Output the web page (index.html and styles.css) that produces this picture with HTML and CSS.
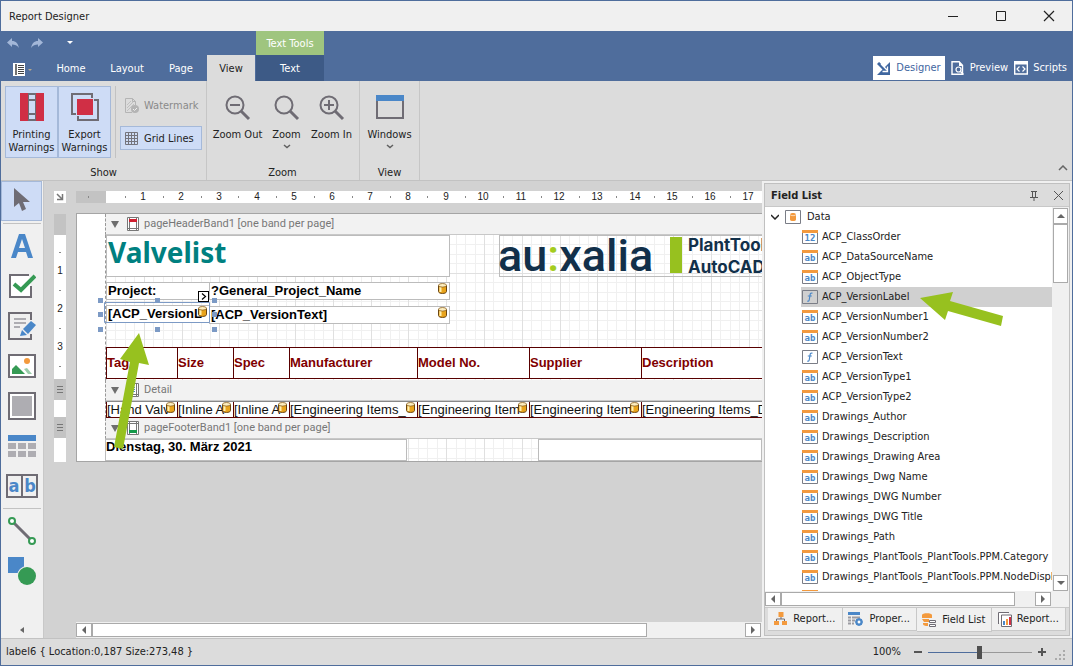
FILE: index.html
```html
<!DOCTYPE html>
<html lang="en">
<head>
<meta charset="utf-8">
<title>Report Designer</title>
<link rel="stylesheet" href="styles.css">
</head>
<body>
<svg class="defs" aria-hidden="true">
  <symbol id="db" viewBox="0 0 9 11"><path d="M.5 2.500v6c0 2.600 8 2.600 8 0v-6z" fill="#e9a41c" stroke="#6b4510"/><path d="M2.500 4v5" stroke="#fff0b0" stroke-width="2"/><ellipse cx="4.500" cy="2.300" rx="4" ry="1.800" fill="#fdeec0" stroke="#8a6020" stroke-width=".8"/></symbol>
  <symbol id="ab" viewBox="0 0 16 14"><path d="M.5 2v11.500h15V2" fill="#fff" stroke="#7a7d86"/><path d="M0 0h16v3H0z" fill="#f39a3e"/><text x="8" y="11" class="glyph">ab</text></symbol>
  <symbol id="num" viewBox="0 0 16 14"><path d="M.5 2v11.500h15V2" fill="#fff" stroke="#7a7d86"/><path d="M0 0h16v3H0z" fill="#f39a3e"/><text x="8" y="11" class="glyph">12</text></symbol>
  <symbol id="fn" viewBox="0 0 16 14"><path d="M.5.500h15v13H.5z" fill="none" stroke="#7a7d86"/><path d="M10.500 3.300c-2-.8-2.300.6-2.500 2L7.300 9.500c-.2 1.500-.9 2-2 1.500M5.800 6h4" fill="none" stroke="#4a87c8" stroke-width="1.200"/></symbol>
  <symbol id="lens" viewBox="0 0 26 26"><circle cx="10" cy="10" r="8.500" fill="none" stroke="#6f6c74" stroke-width="2"/><path d="m16 16 8 8" stroke="#6f6c74" stroke-width="3"/></symbol>
  <symbol id="chev" viewBox="0 0 8 5"><path d="m1 1 3 2.500L7 1" fill="none" stroke="#606060" stroke-width="1.500"/></symbol>
  <symbol id="tri" viewBox="0 0 8 8"><path d="M0 1h8L4 8z" fill="#6e6e6e"/></symbol>
</svg>
<div class="window">
  <header class="titlebar">
    <h1>Report Designer</h1>
    <button aria-label="Minimize"><svg width="12" height="12"><path d="M1 6.500h10" stroke="#222"/></svg></button>
    <button aria-label="Maximize"><svg width="12" height="12"><path d="M1.500 1.500h9v9h-9z" fill="none" stroke="#222"/></svg></button>
    <button aria-label="Close"><svg width="12" height="12"><path d="m1 1 10 10M11 1 1 11" stroke="#222" stroke-width="1.200"/></svg></button>
  </header>

  <div class="ribbon-head">
    <div class="quick">
      <button aria-label="Undo"><svg width="12" height="10"><path d="M0 4.500 5 0v3c4 0 6 2.500 7 7-2-3-4-3.500-7-3.500V9z" fill="#a3b7d8"/></svg></button>
      <button aria-label="Redo"><svg width="12" height="10"><path d="M12 4.500 7 0v3C3 3 1 5.500 0 10c2-3 4-3.500 7-3.500V9z" fill="#a3b7d8"/></svg></button>
      <button aria-label="Customize" class="custom"><svg width="6" height="4"><path d="M0 0h6L3 3z" fill="#fff"/></svg></button>
    </div>
    <nav class="tabs">
      <button class="file" aria-label="File"><svg width="19" height="13"><path d="M0 0h12v13H0z" fill="#fff"/><path d="M3 1v11" stroke="#444" stroke-width="1.500"/><path d="M5 2.500h6M5 4.500h6M5 6.500h6M5 8.500h6M5 10.500h6" stroke="#444"/><path d="M15 6h4l-2 2z" fill="#b9a98c"/></svg></button>
      <button>Home</button><button>Layout</button><button class="page-tab">Page</button><button class="active">View</button>
      <div class="context"><span>Text Tools</span><button>Text</button></div>
    </nav>
    <div class="modes">
      <button class="on"><svg width="14" height="13"><path d="M13 0v13H0z" fill="#3f669f"/><path d="m1 1 8 8" stroke="#3f669f" stroke-width="3"/><path d="m4 2 6 6M10.500 4.500v5h-5" stroke="#fff" stroke-width="1.300" fill="none"/></svg>Designer</button>
      <button><svg width="14" height="14"><path d="M11.500 13.300H1V.7h7l3.500 3.500z" fill="none" stroke="#fff" stroke-width="1.400"/><path d="M8 0v5h4" fill="#fff"/><circle cx="7.500" cy="8.500" r="2.500" fill="#4f6d9c" stroke="#fff" stroke-width="1.200"/><path d="m9.500 10.500 3 3" stroke="#fff" stroke-width="1.500"/></svg>Preview</button>
      <button><svg width="14" height="14"><path d="M.7 1h12.600v12H.7z" fill="none" stroke="#fff" stroke-width="1.400"/><path d="M0 0h14v3.500H0z" fill="#fff"/><path d="M5.500 5.500 3 8l2.500 2.500M8.500 5.500 11 8l-2.500 2.500" fill="none" stroke="#fff" stroke-width="1.200"/></svg>Scripts</button>
    </div>
  </div>

  <section class="ribbon">
    <div class="group show">
      <div class="items">
        <div class="pair">
          <button class="big on"><svg width="24" height="28"><path d="M8 1h8v26H8zM8 7h8M8 21h8" fill="none" stroke="#6f6c74" stroke-width="2"/><path d="M0 0h8v28H0zM16 0h8v28h-8z" fill="#d02f45"/></svg><span>Printing<br>Warnings</span></button>
          <button class="big on"><svg width="28" height="28"><path d="M1 1h20v20H1zM7 7h20v20H7z" fill="none" stroke="#6f6c74" stroke-width="2"/><path d="M5 5h18v18H5z" fill="#cedcf6"/><path d="M6 6h16v16H6z" fill="#d02f45"/></svg><span>Export<br>Warnings</span></button>
        </div>
        <div class="stack">
          <button disabled><svg width="14" height="15"><path d="M7 14.500H.5V.5h7l3 3V7M7.500.5v3h3" fill="none" stroke="#b4b4b4"/><path d="m2 7 4-4M2 10l6-6M2 13l7-7" stroke="#c0c0c0"/><circle cx="10" cy="11" r="4" fill="#b4b4b4"/><path d="m8 11 1.500 1.500L12 10" fill="none" stroke="#eee"/></svg>Watermark</button>
          <button class="on"><svg width="14" height="14"><path d="M.5.500h12v12H.5zM3.500 0v13M6.500 0v13M9.500 0v13M0 3.500h13M0 6.500h13M0 9.500h13" fill="none" stroke="#74747c"/></svg>Grid Lines</button>
        </div>
      </div>
      <h2>Show</h2>
    </div>
    <div class="group zoom">
      <div class="items">
        <button class="big"><svg width="26" height="26"><use href="#lens"/><path d="M5 10h10" stroke="#6f6c74" stroke-width="2"/></svg><span>Zoom Out</span></button>
        <button class="big mid"><svg width="26" height="26"><use href="#lens"/></svg><span>Zoom</span><svg width="8" height="5"><use href="#chev"/></svg></button>
        <button class="big"><svg width="26" height="26"><use href="#lens"/><path d="M5 10h10M10 5v10" stroke="#6f6c74" stroke-width="2"/></svg><span>Zoom In</span></button>
      </div>
      <h2>Zoom</h2>
    </div>
    <div class="group view">
      <div class="items">
        <button class="big"><svg width="28" height="26"><path d="M1 2h26v21H1z" fill="none" stroke="#6f6c74" stroke-width="2"/><path d="M0 0h28v6H0z" fill="#4a87c8"/></svg><span>Windows</span><svg width="8" height="5"><use href="#chev"/></svg></button>
      </div>
      <h2>View</h2>
    </div>
    <button class="collapse" aria-label="Collapse ribbon"><svg width="10" height="6"><path d="m1 5 4-4 4 4" fill="none" stroke="#666" stroke-width="1.500"/></svg></button>
  </section>

  <main>
    <aside class="toolbox">
      <button class="on" aria-label="Pointer"><svg width="18" height="26"><path d="M1 0v19l5-4 3 8 4-2-3-7h7z" fill="#6f6c74"/></svg></button>
      <hr>
      <button aria-label="Label"><svg width="24" height="26"><path fill-rule="evenodd" d="M1 25 9 1h6l8 24h-5l-2-6H8l-2 6zM9 15h6l-3-9z" fill="#4a87c8"/></svg></button>
      <button aria-label="Check Box"><svg width="28" height="26"><path d="M21 2H2v22h21V13" fill="#fff" stroke="#6f6c74" stroke-width="2"/><path d="m6 11 7 6L27 3" fill="none" stroke="#359a54" stroke-width="4"/></svg></button>
      <button aria-label="Rich Text"><svg width="28" height="28"><path d="M23 8V1H1v26h22v-5" fill="none" stroke="#6f6c74" stroke-width="2"/><path d="M6 7h12M6 11h12M6 15h6" stroke="#aeadb2" stroke-width="2"/><path d="m12 24 2-6 5 5zM15 17l8-8 5 4-8 9z" fill="#4a87c8"/></svg></button>
      <button aria-label="Picture Box"><svg width="28" height="24"><path d="M1 1h26v22H1z" fill="#fff" stroke="#6f6c74" stroke-width="2"/><circle cx="19" cy="7" r="3" fill="#f39a3e"/><path d="M4 20v-5l4-4 9 9z" fill="#359a54"/><path d="m16 15 3-1 5 6h-4z" fill="#9accaa"/></svg></button>
      <button aria-label="Panel"><svg width="28" height="28"><path d="M1 1h26v26H1z" fill="#fff" stroke="#6f6c74" stroke-width="2"/><path d="M4 4h20v20H4z" fill="#aeadb2"/></svg></button>
      <button aria-label="Table"><svg width="28" height="22"><path d="M0 0h28v6H0z" fill="#4a87c8"/><path d="M0 8h8v6H0zM10 8h8v6h-8zM20 8h8v6h-8zM0 16h8v6H0zM10 16h8v6h-8zM20 16h8v6h-8z" fill="#aeadb2"/></svg></button>
      <button aria-label="Character Comb"><svg width="32" height="24"><path d="M1 1h30v22H1zM16 1v22" fill="none" stroke="#6f6c74" stroke-width="2"/><text x="8" y="18" class="comb">a</text><text x="24" y="18" class="comb">b</text></svg></button>
      <hr>
      <button aria-label="Line"><svg width="28" height="28"><path d="m5 5 18 18" stroke="#6f6c74" stroke-width="3"/><circle cx="4" cy="4" r="3" fill="#fff" stroke="#359a54" stroke-width="2"/><circle cx="24" cy="24" r="3" fill="#fff" stroke="#359a54" stroke-width="2"/></svg></button>
      <button aria-label="Shape"><svg width="28" height="28"><path d="M0 0h16v16H0z" fill="#4a87c8"/><circle cx="19" cy="19" r="10" fill="#f0f0f0"/><circle cx="19" cy="19" r="9" fill="#359a54"/></svg></button>
      <button class="fold" aria-label="Collapse"><svg width="4" height="6"><path d="M4 0v6L0 3z" fill="#666"/></svg></button>
    </aside>

    <section class="surface">
      <button class="corner" aria-label="Select report"><svg width="8" height="8"><path d="m1 1 5 5M6.500 1v5.500H1" fill="none" stroke="#777" stroke-width="1.500"/></svg></button>
      <svg class="hruler" height="12"><path d="M0 0h30v12H0z" fill="#c3c3c3"/><path d="M30 0h660v12H30z" fill="#fff"/>
        <path d="M12.500 5v2M49.500 5v2M87.500 5v2M125.500 5v2M162.500 5v2M200.500 5v2M238.500 5v2M276.500 5v2M314.500 5v2M351.500 5v2M389.500 5v2M427.500 5v2M465.500 5v2M503.500 5v2M540.500 5v2M578.500 5v2M616.500 5v2M654.500 5v2" stroke="#888"/>
        <text x="67" y="9">1</text><text x="105" y="9">2</text><text x="143" y="9">3</text><text x="181" y="9">4</text><text x="218" y="9">5</text><text x="256" y="9">6</text><text x="294" y="9">7</text><text x="332" y="9">8</text><text x="370" y="9">9</text><text x="407" y="9">10</text><text x="445" y="9">11</text><text x="483" y="9">12</text><text x="521" y="9">13</text><text x="559" y="9">14</text><text x="596" y="9">15</text><text x="634" y="9">16</text><text x="672" y="9">17</text></svg>
      <div class="vruler">
        <i class="cap"></i>
        <svg width="12" height="144"><path d="M5 17.500h2M5 55.500h2M5 93.500h2M5 131.500h2" stroke="#888"/><text x="6" y="39">1</text><text x="6" y="77">2</text><text x="6" y="115">3</text></svg>
        <i class="grip"></i><i class="seg"></i><i class="grip"></i><i class="seg tall"></i>
      </div>
      <div class="page">
        <div class="band-title"><svg width="8" height="8"><use href="#tri"/></svg><svg width="12" height="14"><path d="M.5.500h11v13H.5zM2.500 0v14M9.500 0v14M0 11.500h12" fill="#fff" stroke="#777"/><path d="M2 2h8v3H2z" fill="#d02030"/></svg>pageHeaderBand1 [one band per page]</div>
        <div class="band header">
          <svg class="grid" width="100%" height="100%"><defs><pattern id="g" width="189" height="189" patternUnits="userSpaceOnUse"><path d="M9.500 0v189M19.500 0v189M28.500 0v189M47.500 0v189M57.500 0v189M66.500 0v189M85.500 0v189M95.500 0v189M104.500 0v189M123.500 0v189M132.500 0v189M142.500 0v189M161.500 0v189M170.500 0v189M180.500 0v189M0 9.500h189M0 19.500h189M0 28.500h189M0 47.500h189M0 57.500h189M0 66.500h189M0 85.500h189M0 95.500h189M0 104.500h189M0 123.500h189M0 132.500h189M0 142.500h189" stroke="#f0f0f0"/><path d="M.5 0v189M38.500 0v189M76.500 0v189M113.500 0v189M151.500 0v189M0 38.500h189M0 75.500h189M0 113.500h189" stroke="#e0e0e0"/></pattern></defs><rect width="100%" height="100%" fill="url(#g)"/></svg>
          <div class="label title">Valvelist</div>
          <div class="label project">Project:</div>
          <div class="label pname">?General_Project_Name<svg class="db"><use href="#db"/></svg></div>
          <div class="label version">[ACP_VersionL<svg class="db"><use href="#db"/></svg></div>
          <div class="label vtext">[ACP_VersionText]<svg class="db"><use href="#db"/></svg></div>
          <button class="smart" aria-label="Label tasks"><svg width="9" height="9"><path d="m3 1.500 3.500 3L3 7.500" fill="none" stroke="#000" stroke-width="1.200"/></svg></button>
          <svg class="handles" width="120" height="34"><path d="M6.500 4.500h105v20H6.500z" fill="none" stroke="#7c9ac5"/><path d="M0 0h5v5H0zM57 0h5v5h-5zM114 0h5v5h-5zM0 14h5v5H0zM114 14h5v5h-5zM0 29h5v5H0zM57 29h5v5h-5zM114 29h5v5h-5z" fill="#7c9ac5"/></svg>
          <div class="label logo"><span class="brand">au<b>:</b>xalia</span><i></i><span class="product">PlantTools<br>AutoCAD</span></div>
          <table class="heads"><tr><th>Tag</th><th>Size</th><th>Spec</th><th>Manufacturer</th><th>Model No.</th><th>Supplier</th><th>Description</th></tr></table>
        </div>
        <div class="band-title"><svg width="8" height="8"><use href="#tri"/></svg><svg width="12" height="14"><path d="M.5.500h11v13H.5zM2.500 0v14M9.500 0v14M0 11.500h12" fill="#fff" stroke="#777"/><path d="M4 4.500h4M4 6.500h4M4 8.500h4" stroke="#4a87c8"/></svg>Detail</div>
        <div class="band detail">
          <table><tr><td>[Hand Valv<svg class="db"><use href="#db"/></svg></td><td>[Inline A<svg class="db"><use href="#db"/></svg></td><td>[Inline A<svg class="db"><use href="#db"/></svg></td><td>[Engineering Items_<svg class="db"><use href="#db"/></svg></td><td>[Engineering Item<svg class="db"><use href="#db"/></svg></td><td>[Engineering Item<svg class="db"><use href="#db"/></svg></td><td>[Engineering Items_D</td></tr></table>
        </div>
        <div class="band-title"><svg width="8" height="8"><use href="#tri"/></svg><svg width="12" height="14"><path d="M.5.500h11v13H.5zM2.500 0v14M9.500 0v14M0 2.500h12" fill="#fff" stroke="#777"/><path d="M2 9h8v3H2z" fill="#15994a"/></svg>pageFooterBand1 [one band per page]</div>
        <div class="band footer">
          <svg class="grid" width="100%" height="100%"><rect width="100%" height="100%" fill="url(#g)"/></svg>
          <div class="label date">Dienstag, 30. März 2021</div>
          <div class="label blank"></div>
        </div>
        <svg class="arrow" width="46" height="118"><path d="M33 0 43 32l-10-2-16 86-9-2L24 29l-10-3z" fill="#97c11f"/></svg>
      </div>
      <div class="hscroll"><button aria-label="Scroll left"><svg width="4" height="8"><path d="M4 0v8L0 4z" fill="#666"/></svg></button><i class="thumb"></i><span></span><button aria-label="Scroll right"><svg width="4" height="8"><path d="M0 0v8l4-4z" fill="#666"/></svg></button></div>
    </section>

    <aside class="fields">
      <div class="panel-title"><h2>Field List</h2><button aria-label="Pin"><svg width="8" height="10"><path d="M1 .5h6M2.500 1v5M5.500 1v5M0 6.500h8M4 7v3" stroke="#555" fill="none"/></svg></button><button aria-label="Close panel"><svg width="9" height="9"><path d="m0 0 9 9M9 0 0 9" stroke="#555"/></svg></button></div>
      <div class="tree-area">
        <ul class="tree">
          <li class="root"><svg width="8" height="6"><path d="m0 1 4 4 4-4" fill="none" stroke="#222" stroke-width="1.500"/></svg><svg width="16" height="14"><path d="M.5.500h15v13H.5z" fill="#fff" stroke="#7a7d86"/><path d="M5 4.500v5c0 2 6 2 6 0v-5c0-2-6-2-6 0" fill="#f39a3e"/><path d="M5 4.500c0 1.500 6 1.500 6 0" fill="none" stroke="#fff" stroke-width=".6"/></svg>Data</li>
          <li><svg width="16" height="14"><use href="#num"/></svg>ACP_ClassOrder</li>
          <li><svg width="16" height="14"><use href="#ab"/></svg>ACP_DataSourceName</li>
          <li><svg width="16" height="14"><use href="#ab"/></svg>ACP_ObjectType</li>
          <li class="selected"><svg width="16" height="14"><use href="#fn"/></svg>ACP_VersionLabel</li>
          <li><svg width="16" height="14"><use href="#ab"/></svg>ACP_VersionNumber1</li>
          <li><svg width="16" height="14"><use href="#ab"/></svg>ACP_VersionNumber2</li>
          <li><svg width="16" height="14"><use href="#fn"/></svg>ACP_VersionText</li>
          <li><svg width="16" height="14"><use href="#ab"/></svg>ACP_VersionType1</li>
          <li><svg width="16" height="14"><use href="#ab"/></svg>ACP_VersionType2</li>
          <li><svg width="16" height="14"><use href="#ab"/></svg>Drawings_Author</li>
          <li><svg width="16" height="14"><use href="#ab"/></svg>Drawings_Description</li>
          <li><svg width="16" height="14"><use href="#ab"/></svg>Drawings_Drawing Area</li>
          <li><svg width="16" height="14"><use href="#ab"/></svg>Drawings_Dwg Name</li>
          <li><svg width="16" height="14"><use href="#ab"/></svg>Drawings_DWG Number</li>
          <li><svg width="16" height="14"><use href="#ab"/></svg>Drawings_DWG Title</li>
          <li><svg width="16" height="14"><use href="#ab"/></svg>Drawings_Path</li>
          <li><svg width="16" height="14"><use href="#ab"/></svg>Drawings_PlantTools_PlantTools.PPM.Category</li>
          <li><svg width="16" height="14"><use href="#ab"/></svg>Drawings_PlantTools_PlantTools.PPM.NodeDispl</li>
          <li><svg width="16" height="14"><use href="#ab"/></svg></li>
        </ul>
        <div class="vscroll"><button aria-label="Scroll up"><svg width="8" height="4"><path d="M0 4h8L4 0z" fill="#666"/></svg></button><i class="thumb"></i><span></span><button aria-label="Scroll down"><svg width="8" height="4"><path d="M0 0h8L4 4z" fill="#666"/></svg></button></div>
        <svg class="pointer" width="84" height="36"><path d="m0 6 33-6-3 9 53 15-2 10-53-15-3 9z" fill="#97c11f"/></svg>
      </div>
      <div class="hscroll inner"><button aria-label="Scroll left"><svg width="4" height="8"><path d="M4 0v8L0 4z" fill="#666"/></svg></button><i class="thumb"></i><span></span><button aria-label="Scroll right"><svg width="4" height="8"><path d="M0 0v8l4-4z" fill="#666"/></svg></button></div>
      <div class="panel-tabs">
        <button><svg width="14" height="14"><path d="M4.500 0h5v5h-5zM0 9h5v4H0zM8 9h5v4H8z" fill="#f39a3e"/><path d="M7 5v2M2.500 9V7h8v2" fill="none" stroke="#6f6c74"/></svg>Report...</button>
        <button><svg width="16" height="14"><path d="M0 0h12v3H0z" fill="#4a87c8"/><path d="M0 5.500h3m1 0h8M0 8.500h3m1 0h3M0 11.500h3m1 0h2" stroke="#9b9ba2" stroke-width="2"/><circle cx="11" cy="10" r="2.700" fill="#f0f0f0" stroke="#4a87c8" stroke-width="2"/><path d="M11 6v8M7 10h8M8.200 7.200l5.600 5.600M13.800 7.200l-5.600 5.600" stroke="#4a87c8"/><circle cx="11" cy="10" r="1.200" fill="#fff"/></svg>Proper...</button>
        <button class="on"><svg width="15" height="15"><path d="M0 2c0-2.500 10-2.500 10 0v3H0zM0 6h7v3H2zM1 10h5v3c-3 0-5-.5-5-2z" fill="#f39a3e"/><path d="M7.500 7.500h6v2h-6zM7.500 11.500h6v2h-6z" fill="#fff" stroke="#6f6c74"/></svg>Field List</button>
        <button><svg width="14" height="15"><path d="M.5 12V.5H11M3.500 3h10v11.500h-10z" fill="#fff" stroke="#6f6c74"/><path d="M5 9h2v4H5z" fill="#4a87c8"/><path d="M8 7h2v6H8z" fill="#f39a3e"/><path d="M11 5h2v8h-2z" fill="#d02f45"/></svg>Report...</button>
      </div>
    </aside>
  </main>

  <footer class="status">
    <span class="info">label6 { Location:0,187 Size:273,48 }</span>
    <label for="zoom">100%</label>
    <button aria-label="Zoom out"><svg width="8" height="8"><path d="M0 4h8" stroke="#555" stroke-width="2"/></svg></button>
    <input id="zoom" type="range" min="0" max="100" value="49">
    <button aria-label="Zoom in"><svg width="8" height="8"><path d="M0 4h8M4 0v8" stroke="#555" stroke-width="2"/></svg></button>
    <svg class="size-grip" width="11" height="11"><path d="M8 0h2v2H8zM4 4h2v2H4zM8 4h2v2H8zM0 8h2v2H0zM4 8h2v2H4zM8 8h2v2H8z" fill="#aaa"/></svg>
  </footer>
</div>
</body>
</html>
```
FILE: styles.css
```css
* { box-sizing: border-box; }
body { margin: 0; font: 11px/14px "DejaVu Sans Condensed", "DejaVu Sans", sans-serif; color: #222; }
button { font: inherit; color: inherit; background: none; border: 0; padding: 0; margin: 0; display: flex; align-items: center; justify-content: center; }
h1, h2 { font: inherit; margin: 0; }
svg { display: block; flex: none; }
.defs { position: absolute; width: 0; height: 0; }
.glyph { font: bold 9px "DejaVu Sans Mono", monospace; fill: #4a87c8; text-anchor: middle; }
.comb { font: bold 18px "DejaVu Sans Condensed", sans-serif; fill: #4a87c8; text-anchor: middle; }

.window { height: 100vh; display: flex; flex-direction: column; border: 1px solid #4f6d9c; background: #dcdcdc; }
.titlebar { height: 30px; background: #f0f0f0; display: flex; align-items: center; padding-left: 8px; }
.titlebar h1 { flex: 1; padding-top: 1px; }
.titlebar button { width: 48px; height: 30px; padding-left: 2px; }

.ribbon-head { background: #4f6d9c; color: #fff; height: 50px; display: grid; grid-template-columns: auto 1fr; grid-template-rows: 24px 26px; }
.quick { grid-column: 1 / 3; display: flex; gap: 12px; padding-left: 6px; }
.quick .custom { margin-left: 12px; }
.tabs { display: flex; align-items: stretch; }
.tabs button { padding-top: 2px; }
.tabs > button { width: 56px; }
.tabs > .file { width: 42px; }
.tabs > .page-tab { width: 52px; }
.tabs > .active { width: 48px; background: #dcdcdc; color: #222; }
.context { display: flex; flex-direction: column; width: 69px; margin-top: -24px; padding-left: 1px; }
.context span { background: #9fc57f; height: 24px; line-height: 25px; text-align: center; }
.context button { background: #3d5a86; height: 26px; }
.modes { display: flex; justify-content: flex-end; align-items: center; padding-right: 5px; gap: 6px; }
.modes button { gap: 5px; height: 24px; }
.modes .on { background: #fff; color: #3f669f; padding: 0 4px; }

.ribbon { height: 100px; display: flex; border-bottom: 1px solid #c2c2c2; }
.group { border-right: 1px solid #c6c6c6; display: flex; flex-direction: column; padding: 5px 4px 0; }
.group h2 { text-align: center; line-height: 30px; height: 20px; }
.items { display: flex; height: 72px; }
.big { width: 53px; height: 72px; flex-direction: column; justify-content: flex-start; padding-top: 6px; gap: 7px; line-height: 13px; }
.on.big { border: 1px solid #a5b9d9; background: #cedcf6; }
.pair { display: flex; border-right: 1px solid #c2c2c2; padding-right: 4px; }
.stack { display: flex; flex-direction: column; gap: 9px; padding: 7px 0 0 4px; }
.stack button { height: 24px; width: 82px; justify-content: flex-start; gap: 5px; padding: 1px 0 0 4px; border: 1px solid transparent; white-space: nowrap; }
.stack .on { border-color: #a5b9d9; background: #cedcf6; }
.stack button:disabled { color: #8a8a8a; }
.zoom .big, .view .big { gap: 7px; padding-top: 9px; width: 45px; white-space: nowrap; }
.zoom .big:first-child { width: 53px; }
.zoom { padding-right: 5px; }
.view .big { width: 51px; }
.big svg + span + svg { margin-top: -4px; }
.collapse { margin-left: auto; align-self: flex-end; padding: 0 4px 9px 0; }

main { flex: 1; display: flex; min-height: 0; background: #f0f0f0; }
.toolbox { width: 43px; background: #f0f0f0; border-right: 1px solid #c8c8c8; display: flex; flex-direction: column; padding: 0 1px 0 0; }
.toolbox button { height: 40px; }
.toolbox .on { background: #cedcf6; border: 1px solid #a5b9d9; }
.toolbox hr { border: 0; border-top: 1px solid #c2c2c2; width: 38px; height: 1px; margin: 2px auto; }
.toolbox .fold { margin-top: auto; height: 16px; }

.surface { flex: 1; min-width: 0; background: #d2d2d2; padding: 10px 0 0 10px; display: grid; grid-template-columns: 12px 1fr; grid-template-rows: 12px 1fr 16px; column-gap: 10px; overflow: hidden; }
.surface > * { min-width: 0; }
.corner { background: #fff; }
.hruler { width: 100%; }
.hruler text, .vruler text { font: 10px "Liberation Sans", sans-serif; text-anchor: middle; fill: #222; }
.vruler { padding-top: 11px; }
.vruler svg { background: #fff; }
.vruler i { display: block; background: #c3c3c3; height: 21px; }
.vruler .seg { background: #fff; height: 17px; }
.vruler .tall { height: 24px; }
.vruler .grip { padding: 7px 3px; background: repeating-linear-gradient(#777 0 1px, #c3c3c3 1px 3px) content-box, #c3c3c3; }
.page { margin-top: 10px; align-self: start; background: #fff; border: 1px solid #a5a5a5; border-right: 0; padding-left: 28px; position: relative; overflow: hidden; white-space: nowrap; }
.band-title { height: 21px; background: #f2f2f2; border-bottom: 1px solid #c8c8c8; border-left: 1px dashed #999; color: #777; display: flex; align-items: center; gap: 5px; padding-left: 5px; font: 11px/14px Roboto, sans-serif; }
.band-title svg + svg { margin-left: 3px; }
.band { position: relative; border-left: 1px dashed #999; }
.band.header { height: 145px; }
.band.detail { height: 17px; }
.band.footer { height: 22px; }
.grid { position: absolute; inset: 0; }
.label { position: absolute; border: 1px solid #bcbcbc; background: #fff; font: bold 13px/15px "Liberation Sans", sans-serif; color: #000; padding-left: 1px; }
.db { position: absolute; right: 2px; top: 0; width: 9px; height: 11px; }
.title { left: 0; top: 0; width: 344px; height: 42px; font: bold 28px/32px "Noto Sans", sans-serif; color: #008080; }
.project { left: 0; top: 47px; width: 104px; height: 18px; }
.pname { left: 103px; top: 47px; width: 241px; height: 18px; }
.version { left: 0; top: 70px; width: 104px; height: 18px; }
.vtext { left: 103px; top: 71px; width: 241px; height: 18px; }
.smart { position: absolute; left: 92px; top: 56px; width: 11px; height: 11px; background: #fff; border: 1px solid #000; }
.handles { position: absolute; left: -8px; top: 63px; }
.logo { left: 393px; top: 0; width: 300px; height: 42px; display: flex; background: none; color: #12304a; padding: 0; }
.brand { font: 500 45px/40px Roboto, sans-serif; width: 155px; margin: 0 2px 0 -2px; }
.brand b { color: #a4cc1e; font-weight: 500; }
.logo i { width: 12px; height: 36px; margin: 1px 6px 0 15px; background: #97c11f; }
.product { font: bold 17px/22px Inter, sans-serif; margin-top: -2px; }
table { border-collapse: collapse; table-layout: fixed; width: 100%; background: #fff; font: 13px/16px "Liberation Sans", sans-serif; color: #111; }
th, td { border: 1px solid #580000; border-right: 0; padding: 0; text-align: left; position: relative; }
th:nth-child(1), td:nth-child(1) { width: 71px; }
th:nth-child(2), td:nth-child(2), th:nth-child(3), td:nth-child(3) { width: 56px; }
th:nth-child(4), td:nth-child(4) { width: 128px; }
th:nth-child(5), td:nth-child(5), th:nth-child(6), td:nth-child(6) { width: 112px; }
.heads { position: absolute; left: 0; bottom: 1px; color: #800000; }
.heads th { height: 31px; }
.detail td { height: 16px; line-height: 14px; border-top-color: #888; }
.date { left: -1px; top: 0; width: 302px; height: 22px; padding: 0; line-height: 14px; }
.blank { left: 432px; right: 0; top: 0; height: 22px; }
.arrow { position: absolute; left: 29px; top: 119px; }

.hscroll { display: flex; height: 16px; background: #f0f0f0; border: 1px solid #f0f0f0; border-left: 0; grid-column: 2; }
.hscroll button { width: 16px; background: #fff; border: 1px solid #aaa; }
.thumb { background: #fff; border: 1px solid #aaa; }
.hscroll .thumb { flex: 556; }
.hscroll span { flex: 98; }

.fields { width: 306px; margin: 2px; background: #f0f0f0; border: 1px solid #c0c0c0; display: flex; flex-direction: column; min-height: 0; }
.panel-title { display: flex; align-items: center; height: 23px; background: #dcdcdc; border-bottom: 1px solid #c8c8c8; padding: 1px 6px 0 6px; gap: 16px; flex: none; }
.panel-title h2 { flex: 1; font-weight: bold; }
.tree-area { flex: 1; display: flex; min-height: 0; position: relative; padding-left: 1px; background: #fff; }
.tree { flex: 1; min-width: 0; margin: 0; padding: 0; list-style: none; overflow: hidden; white-space: nowrap; }
.tree li { display: flex; align-items: center; gap: 4px; height: 20px; margin-left: 35px; padding-left: 1px; }
.tree .root { margin-left: 4px; gap: 6px; }
.tree .selected { background: #d0d0d0; }
.vscroll { width: 17px; display: flex; flex-direction: column; background: #f0f0f0; padding: 1px 1px 0; }
.vscroll button { height: 16px; background: #fff; border: 1px solid #aaa; }
.vscroll .thumb { height: 59px; }
.vscroll span { flex: 1; }
.pointer { position: absolute; left: 155px; top: 85px; }
.inner { margin-right: 17px; flex: none; }
.inner .thumb { flex: 233; }
.inner span { flex: 20; }
.panel-tabs { display: flex; height: 28px; border-top: 1px solid #c8c8c8; background: #dcdcdc; padding: 0 3px 4px; flex: none; }
.panel-tabs button { flex: 1; background: #f0f0f0; border: 1px solid #c8c8c8; border-top: 0; border-left: 0; gap: 5px; min-width: 0; white-space: nowrap; }
.panel-tabs .on { padding-top: 1px; margin-bottom: -1px; }

.status { height: 27px; border-top: 1px solid #c2c2c2; display: flex; align-items: center; gap: 9px; padding: 0 6px 0 5px; }
.info { flex: 1; }
.status label { margin-right: 4px; }
.status input { appearance: none; width: 104px; height: 14px; margin: 0 -3px; background: linear-gradient(90deg, #4f6d9c 50%, #999 50%) center / 100% 1px no-repeat; }
.status input::-webkit-slider-thumb { appearance: none; width: 5px; height: 13px; background: #505050; }
.size-grip { align-self: flex-end; margin-bottom: 4px; }
```
